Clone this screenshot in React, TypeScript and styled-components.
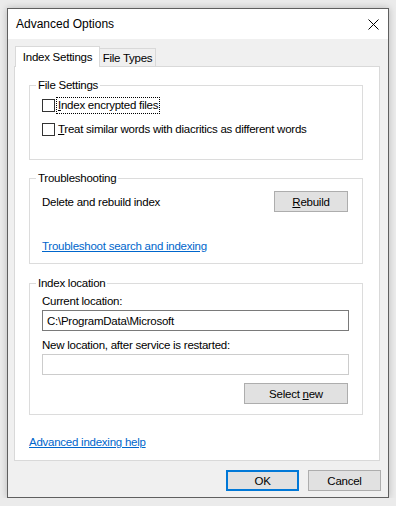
import React from "react";
import styled, { createGlobalStyle } from "styled-components";

const GlobalStyle = createGlobalStyle`
  html, body {
    margin: 0;
    padding: 0;
  }
  body {
    background: #ebebeb;
    font-family: "Liberation Sans", Arial, sans-serif;
    color: #000;
  }
`;

const Page = styled.div`
  padding: 8px 0 0 7px;
`;

const Window = styled.div`
  width: 382px;
  height: 490px;
  box-sizing: border-box;
  border: 1px solid #5f5f5f;
  box-shadow: 0 0 7px rgba(0, 0, 0, 0.22);
  background: #f0f0f0;
  display: flex;
  flex-direction: column;
`;

const TitleBar = styled.div`
  height: 30px;
  flex: none;
  background: #fff;
  display: flex;
  align-items: center;
  justify-content: space-between;
  padding: 0 9px 0 8px;
  font-size: 12px;
`;

const CloseIcon = styled.svg`
  width: 11px;
  height: 11px;
  display: block;
`;

const Body = styled.div`
  flex: 1;
  display: flex;
  flex-direction: column;
  padding: 7px 8px 6px 6px;
`;

const TabRow = styled.div`
  height: 20px;
  display: flex;
  align-items: flex-end;
  padding-left: 1px;
`;

const Tab = styled.div<{ $active?: boolean }>`
  box-sizing: border-box;
  display: flex;
  align-items: center;
  justify-content: center;
  border: 1px solid #d9d9d9;
  border-bottom: none;
  font-size: 11.5px;
  letter-spacing: -0.25px;
  position: relative;
  width: ${({ $active }) => ($active ? "85px" : "57px")};
  height: ${({ $active }) => ($active ? "21px" : "18px")};
  margin-bottom: ${({ $active }) => ($active ? "-1px" : "0")};
  margin-left: ${({ $active }) => ($active ? "0" : "-1px")};
  background: ${({ $active }) => ($active ? "#fff" : "#f0f0f0")};
  z-index: ${({ $active }) => ($active ? 2 : 1)};
`;

const Panel = styled.div`
  height: 395px;
  box-sizing: border-box;
  border: 1px solid #d9d9d9;
  background: #fff;
  padding: 18px 16px 10px 14px;
  display: flex;
  flex-direction: column;
  font-size: 11.5px;
  letter-spacing: -0.25px;
  line-height: 16px;
`;

const Group = styled.div<{ $pad: string; $gap?: number }>`
  position: relative;
  border: 1px solid #dcdcdc;
  padding: ${({ $pad }) => $pad};
  display: flex;
  flex-direction: column;
  margin-bottom: ${({ $gap }) => $gap ?? 0}px;
`;

const Caption = styled.span`
  position: absolute;
  top: -9px;
  left: 6px;
  padding: 0 2px;
  background: #fff;
  line-height: 16px;
`;

const CheckRow = styled.label<{ $gap?: number }>`
  height: 16px;
  display: flex;
  align-items: center;
  margin-bottom: ${({ $gap }) => $gap ?? 0}px;
`;

const Box = styled.span`
  width: 13px;
  height: 13px;
  box-sizing: border-box;
  border: 1px solid #333;
  background: #fff;
  flex: none;
  margin-right: 2px;
`;

const CheckText = styled.span<{ $focused?: boolean }>`
  padding: 0 1px;
  line-height: 15px;
  outline: ${({ $focused }) => ($focused ? "1px dotted #000" : "none")};
  outline-offset: 0;
`;

const ActionRow = styled.div`
  height: 21px;
  display: flex;
  align-items: center;
  justify-content: space-between;
  margin-right: 1px;
`;

const Button = styled.button<{ $width: number; $default?: boolean }>`
  width: ${({ $width }) => $width}px;
  height: 21px;
  box-sizing: border-box;
  background: #e1e1e1;
  border: ${({ $default }) =>
    $default ? "2px solid #0078d7" : "1px solid #adadad"};
  font-family: inherit;
  font-size: 11.5px;
  letter-spacing: -0.25px;
  color: #000;
  padding: 0;
`;

const Link = styled.a<{ $top?: number }>`
  color: #0066cc;
  text-decoration: underline;
  line-height: 16px;
  align-self: flex-start;
  margin-top: ${({ $top }) => $top ?? 0}px;
`;

const FieldLabel = styled.div<{ $top?: number }>`
  line-height: 16px;
  margin-top: ${({ $top }) => $top ?? 0}px;
`;

const TextBox = styled.div<{ $disabled?: boolean }>`
  height: 21px;
  box-sizing: border-box;
  margin-top: 1px;
  border: 1px solid ${({ $disabled }) => ($disabled ? "#cccccc" : "#7a7a7a")};
  background: #fff;
  padding-left: 4px;
  display: flex;
  align-items: center;
`;

const RightAligned = styled.div`
  display: flex;
  justify-content: flex-end;
  margin-top: 8px;
  margin-right: 1px;
`;

const Footer = styled.div`
  display: flex;
  justify-content: flex-end;
  gap: 9px;
  margin-top: 9px;
  margin-right: -1px;
`;

export default function App() {
  return (
    <>
      <GlobalStyle />
      <Page>
        <Window>
          <TitleBar>
            <span>Advanced Options</span>
            <CloseIcon viewBox="0 0 11 11">
              <path d="M0.5 0.5 L10.5 10.5 M10.5 0.5 L0.5 10.5" stroke="#000" strokeWidth="1" fill="none" />
            </CloseIcon>
          </TitleBar>
          <Body>
            <TabRow>
              <Tab $active>Index Settings</Tab>
              <Tab>File Types</Tab>
            </TabRow>
            <Panel>
              <Group $pad="11px 0 22px 12px" $gap={18}>
                <Caption>File Settings</Caption>
                <CheckRow $gap={8}>
                  <Box />
                  <CheckText $focused>
                    <u>I</u>ndex encrypted files
                  </CheckText>
                </CheckRow>
                <CheckRow>
                  <Box />
                  <CheckText>
                    <u>T</u>reat similar words with diacritics as different words
                  </CheckText>
                </CheckRow>
              </Group>

              <Group $pad="12px 13px 9px 12px" $gap={19}>
                <Caption>Troubleshooting</Caption>
                <ActionRow>
                  <span>Delete and rebuild index</span>
                  <Button $width={74}>
                    <u>R</u>ebuild
                  </Button>
                </ActionRow>
                <Link $top={26}>Troubleshoot search and indexing</Link>
              </Group>

              <Group $pad="9px 13px 10px 12px" $gap={19}>
                <Caption>Index location</Caption>
                <FieldLabel>Current location:</FieldLabel>
                <TextBox>C:\ProgramData\Microsoft</TextBox>
                <FieldLabel $top={6}>New location, after service is restarted:</FieldLabel>
                <TextBox $disabled />
                <RightAligned>
                  <Button $width={104}>
                    Select <u>n</u>ew
                  </Button>
                </RightAligned>
              </Group>

              <Link>Advanced indexing help</Link>
            </Panel>
            <Footer>
              <Button $width={73} $default>
                OK
              </Button>
              <Button $width={73}>Cancel</Button>
            </Footer>
          </Body>
        </Window>
      </Page>
    </>
  );
}
